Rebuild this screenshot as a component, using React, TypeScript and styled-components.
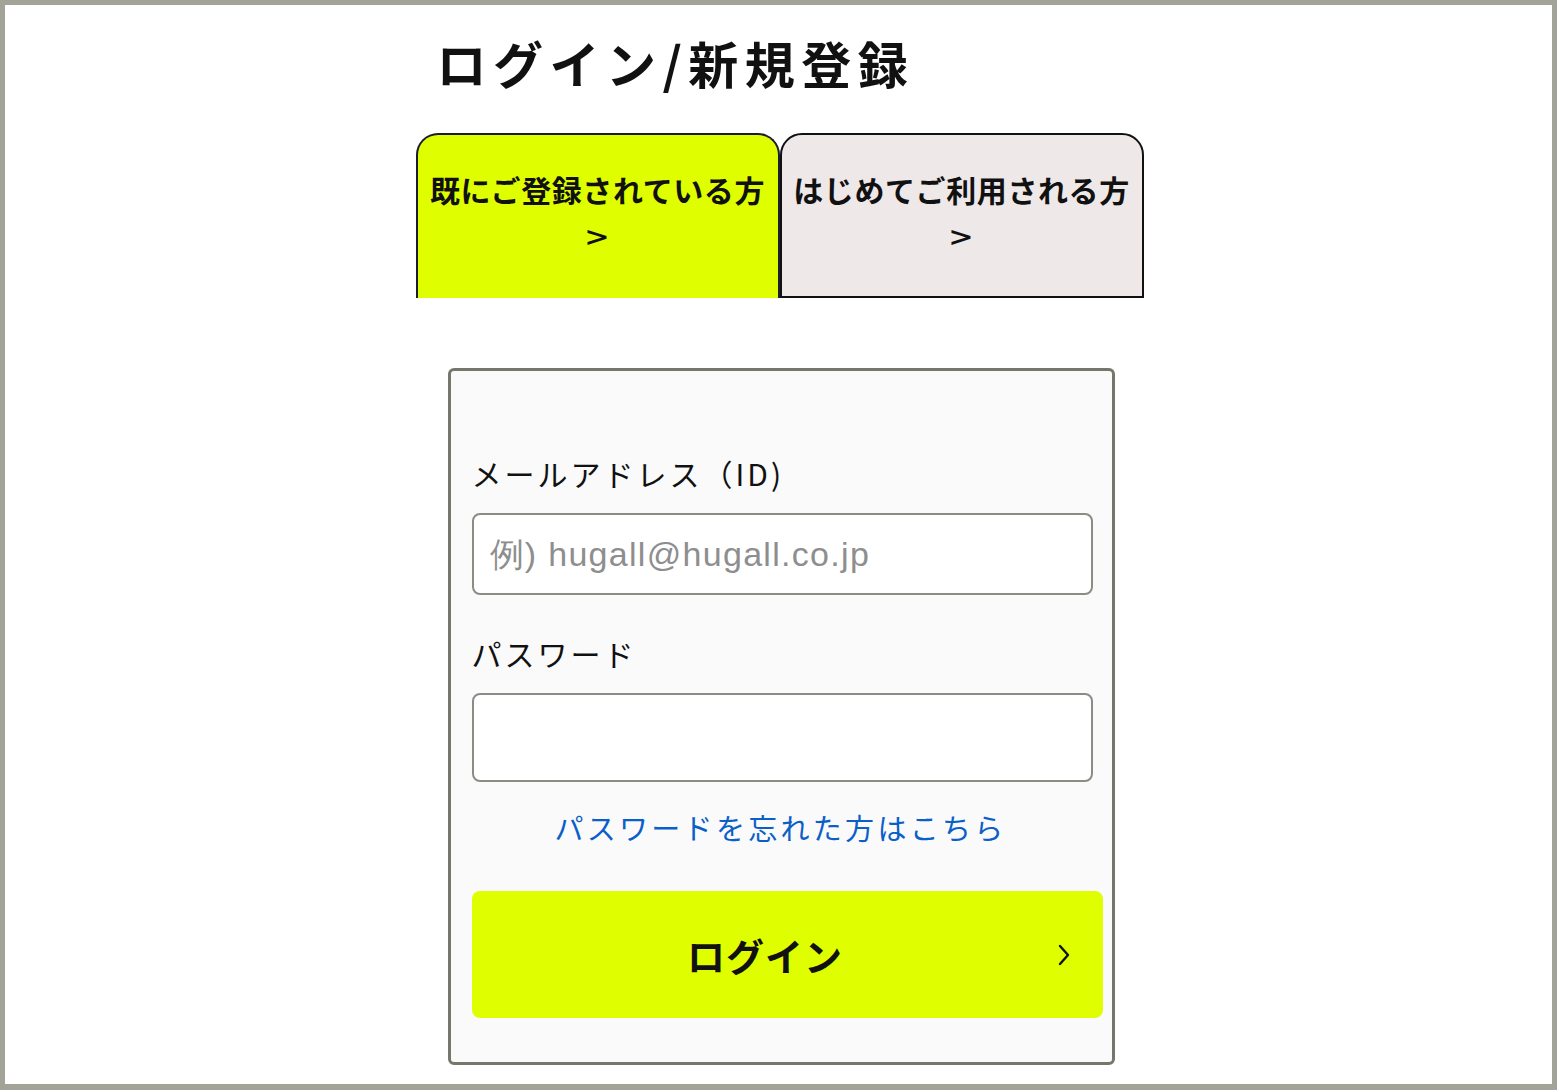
import React from "react";
import styled, { createGlobalStyle } from "styled-components";

const GlobalStyle = createGlobalStyle`
  html, body {
    margin: 0;
    padding: 0;
    background: #ffffff;
  }
  body {
    font-family: "Noto Sans CJK JP", "Noto Sans", sans-serif;
    color: #111;
  }
  * {
    box-sizing: border-box;
  }
`;

const Frame = styled.div`
  height: 1090px;
  border: 5px solid #a3a497;
  border-bottom-width: 6px;
  background: #ffffff;
  overflow: hidden;
`;

const Page = styled.main`
  width: 730px;
  margin: 0 auto;
  display: flex;
  flex-direction: column;
  padding: 19px 0 0 2px;
`;

const Title = styled.h1`
  margin: 0 0 0 21px;
  font-size: 50px;
  line-height: 76px;
  font-weight: 700;
  letter-spacing: 6.5px;
  color: #111;
`;

const TabRow = styled.div`
  display: flex;
  margin-top: 33px;
`;

const Tab = styled.button<{ active?: boolean }>`
  flex: 1;
  height: 165px;
  display: flex;
  flex-direction: column;
  align-items: center;
  justify-content: flex-start;
  padding: 32px 0 0;
  border: 2px solid ${({ active }) => (active ? "#1c1c30" : "#111")};
  border-bottom: ${({ active }) => (active ? "none" : "2px solid #111")};
  border-radius: 22px 22px 0 0;
  background: ${({ active }) => (active ? "#dfff00" : "#efe8e8")};
  font-family: "Noto Sans CJK JP", sans-serif;
  font-size: 30px;
  font-weight: 700;
  letter-spacing: 0.6px;
  color: #111;
  cursor: pointer;
`;

const TabLabel = styled.span`
  line-height: 44px;
  white-space: nowrap;
`;

const TabArrow = styled.span`
  margin-top: 2px;
  line-height: 44px;
  font-size: 32px;
  font-weight: 500;
  transform: scaleX(1.2);
`;

const Card = styled.form`
  width: 667px;
  margin: 70px 0 0 32px;
  padding: 82px 10px 44px 21px;
  background: #fafafa;
  border: 3px solid #75776c;
  border-radius: 6px;
  display: flex;
  flex-direction: column;
`;

const Label = styled.label`
  font-size: 30px;
  line-height: 40px;
  letter-spacing: 3px;
  color: #111;
  margin-bottom: 20px;
`;

const Field = styled.div<{ last?: boolean }>`
  display: flex;
  flex-direction: column;
  margin-bottom: ${({ last }) => (last ? "25px" : "38px")};
`;

const Input = styled.input<{ tall?: boolean }>`
  width: 621px;
  height: ${({ tall }) => (tall ? "89px" : "82px")};
  border: 2px solid #8c8c86;
  border-radius: 8px;
  background: #ffffff;
  padding: 0 16px;
  font-family: "Liberation Sans", Arial, sans-serif;
  font-size: 34px;
  letter-spacing: 1.3px;
  color: #333;
  outline: none;

  &::placeholder {
    color: #8e8e8e;
  }
`;

const ForgotLink = styled.a`
  align-self: center;
  margin-right: 12px;
  font-size: 29px;
  line-height: 40px;
  letter-spacing: 3.3px;
  color: #0a5fc8;
  text-decoration: none;
`;

const LoginButton = styled.button`
  margin-top: 44px;
  width: 631px;
  height: 127px;
  position: relative;
  display: flex;
  align-items: center;
  justify-content: center;
  border: none;
  border-radius: 8px;
  background: #dfff00;
  font-family: "Noto Sans CJK JP", sans-serif;
  font-size: 38px;
  font-weight: 700;
  letter-spacing: 1px;
  color: #111;
  cursor: pointer;
  padding: 0 44px 0 0;
`;

const Chevron = styled.svg`
  position: absolute;
  right: 33px;
  top: 53px;
`;

export default function App() {
  return (
    <>
      <GlobalStyle />
      <Frame>
        <Page>
          <Title>ログイン/新規登録</Title>
          <TabRow>
            <Tab active type="button">
              <TabLabel>既にご登録されている方</TabLabel>
              <TabArrow>&gt;</TabArrow>
            </Tab>
            <Tab type="button">
              <TabLabel>はじめてご利用される方</TabLabel>
              <TabArrow>&gt;</TabArrow>
            </Tab>
          </TabRow>
          <Card onSubmit={(e) => e.preventDefault()}>
            <Field>
              <Label htmlFor="email">メールアドレス（ID)</Label>
              <Input id="email" type="email" placeholder="例) hugall@hugall.co.jp" />
            </Field>
            <Field last>
              <Label htmlFor="password">パスワード</Label>
              <Input id="password" type="password" tall />
            </Field>
            <ForgotLink href="#">パスワードを忘れた方はこちら</ForgotLink>
            <LoginButton type="submit">
              ログイン
              <Chevron width="12" height="22" viewBox="0 0 12 22">
                <path d="M2 2 L10 11 L2 20" fill="none" stroke="#111" strokeWidth="2.4" strokeLinecap="round" strokeLinejoin="round" />
              </Chevron>
            </LoginButton>
          </Card>
        </Page>
      </Frame>
    </>
  );
}
